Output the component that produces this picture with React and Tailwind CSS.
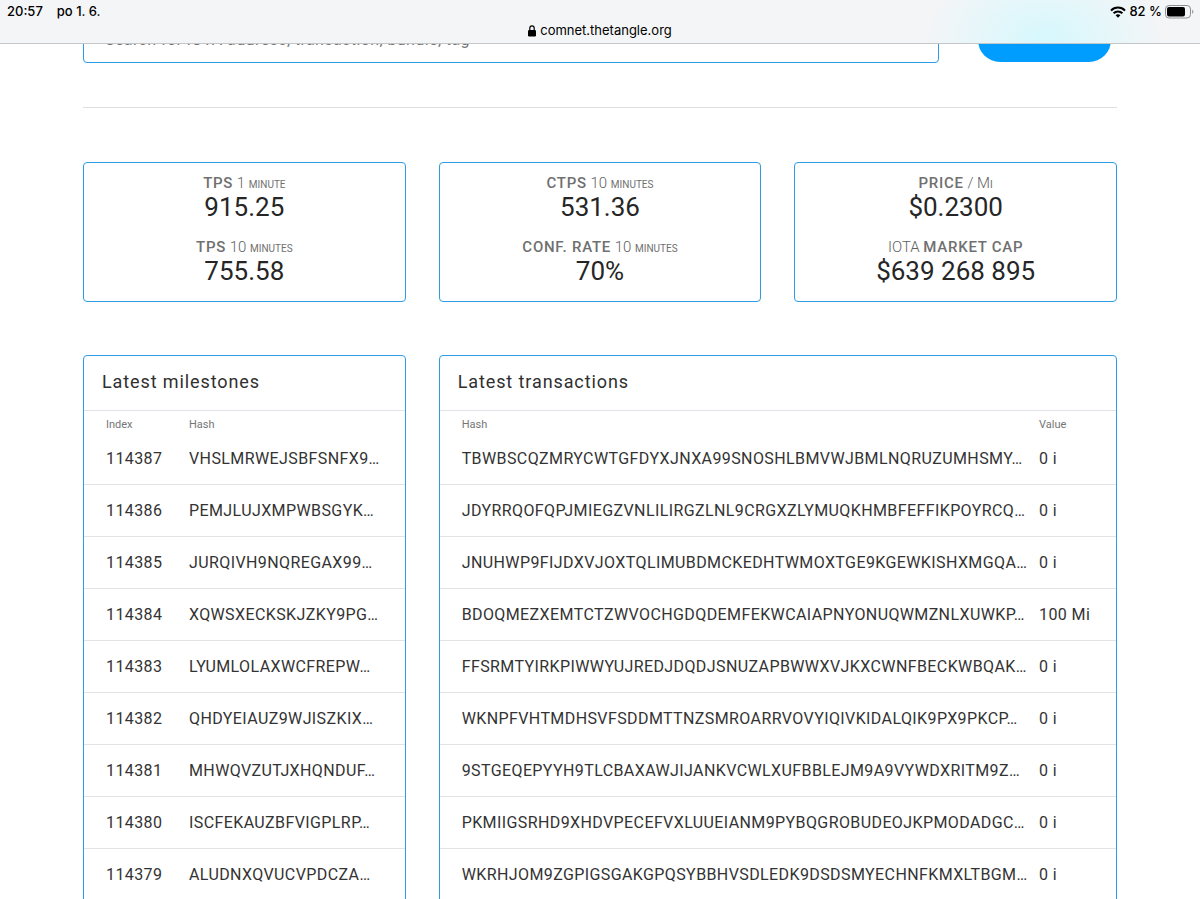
import { Search } from 'lucide-react';

const MILESTONES = [
  { index: '114387', hash: 'VHSLMRWEJSBFSNFX9…' },
  { index: '114386', hash: 'PEMJLUJXMPWBSGYK…' },
  { index: '114385', hash: 'JURQIVH9NQREGAX99…' },
  { index: '114384', hash: 'XQWSXECKSKJZKY9PG…' },
  { index: '114383', hash: 'LYUMLOLAXWCFREPW…' },
  { index: '114382', hash: 'QHDYEIAUZ9WJISZKIX…' },
  { index: '114381', hash: 'MHWQVZUTJXHQNDUF…' },
  { index: '114380', hash: 'ISCFEKAUZBFVIGPLRP…' },
  { index: '114379', hash: 'ALUDNXQVUCVPDCZA…' },
];

const TRANSACTIONS = [
  { hash: 'TBWBSCQZMRYCWTGFDYXJNXA99SNOSHLBMVWJBMLNQRUZUMHSMY…', value: '0 i' },
  { hash: 'JDYRRQOFQPJMIEGZVNLILIRGZLNL9CRGXZLYMUQKHMBFEFFIKPOYRCQ…', value: '0 i' },
  { hash: 'JNUHWP9FIJDXVJOXTQLIMUBDMCKEDHTWMOXTGE9KGEWKISHXMGQA…', value: '0 i' },
  { hash: 'BDOQMEZXEMTCTZWVOCHGDQDEMFEKWCAIAPNYONUQWMZNLXUWKP…', value: '100 Mi' },
  { hash: 'FFSRMTYIRKPIWWYUJREDJDQDJSNUZAPBWWXVJKXCWNFBECKWBQAK…', value: '0 i' },
  { hash: 'WKNPFVHTMDHSVFSDDMTTNZSMROARRVOVYIQIVKIDALQIK9PX9PKCP…', value: '0 i' },
  { hash: '9STGEQEPYYH9TLCBAXAWJIJANKVCWLXUFBBLEJM9A9VYWDXRITM9Z…', value: '0 i' },
  { hash: 'PKMIIGSRHD9XHDVPECEFVXLUUEIANM9PYBQGROBUDEOJKPMODADGC…', value: '0 i' },
  { hash: 'WKRHJOM9ZGPIGSGAKGPQSYBBHVSDLEDK9DSDSMYECHNFKMXLTBGM…', value: '0 i' },
];

function StatusBar() {
  return (
    <header className="fixed inset-x-0 top-0 z-10 h-11 border-b border-[#c4c6c8] bg-[#f4f5f7] font-['Inter',sans-serif] text-black">
      <div className="h-full bg-[radial-gradient(ellipse_120px_80px_at_87%_90%,#d6f8fd,transparent)]">
        <div className="flex h-[23px] items-center justify-between pr-1.5 pl-[7px] text-[13px] font-medium">
          <div className="flex gap-3.5">
            <span>20:57</span>
            <span>po 1. 6.</span>
          </div>
          <div className="flex items-center gap-[3px]">
            <svg viewBox="0 0 16 12" className="h-3 w-4" fill="none" stroke="currentColor" strokeWidth="2">
              <path d="M1 4.6 C4.8 0.6 11.2 0.6 15 4.6" />
              <path d="M3.6 7.3 C6 4.8 10 4.8 12.4 7.3" />
              <path d="M8 11.8 L5.6 9.3 C7 8 9 8 10.4 9.3 Z" fill="currentColor" stroke="none" />
            </svg>
            <span>82 %</span>
            <svg viewBox="0 0 29 14" className="h-3.5 w-[29px]">
              <rect x="0.5" y="0.5" width="25" height="12.5" rx="3.5" fill="none" stroke="#8c8f91" />
              <rect x="2" y="2" width="18" height="9.5" rx="2" />
              <path d="M27.2 4.8 C28.8 5.4 28.8 8.2 27.2 8.8 Z" fill="#8c8f91" />
            </svg>
          </div>
        </div>
        <div className="flex h-4 items-center justify-center gap-1 text-[13px]">
          <svg viewBox="0 0 8 12" className="h-3 w-2">
            <rect y="5" width="8" height="6.5" rx="1.2" />
            <path d="M1.8 5.5 V3.2 a2.2 2.4 0 0 1 4.4 0 V5.5" fill="none" stroke="currentColor" strokeWidth="1.2" />
          </svg>
          <span>comnet.thetangle.org</span>
        </div>
      </div>
    </header>
  );
}

function Stat({ label, value }) {
  return (
    <div className="h-16 text-center">
      <div className="h-5 text-[15px] leading-5 font-light text-[#5f5f5f]">{label}</div>
      <div className="text-[26px] leading-7 text-[#262626]">{value}</div>
    </div>
  );
}

function Strong({ children }) {
  return <strong className="font-medium tracking-wider text-[#707070]">{children}</strong>;
}

function Unit({ children }) {
  return <span className="text-[10px] leading-none font-normal text-[#707070] uppercase">{children}</span>;
}

function StatCard({ children }) {
  return <div className="h-[140px] rounded border border-[#2d9ce6] pt-[10px]">{children}</div>;
}

function Panel({ title, className = '', children }) {
  return (
    <section className={`rounded border border-[#2d9ce6] pb-6 ${className}`}>
      <h2 className="border-b border-[#e2e3ea] px-[18px] pt-3 pb-3.5 text-lg leading-7 tracking-wider text-[#2f2f2f]">{title}</h2>
      {children}
    </section>
  );
}

function Th({ className = '', children }) {
  return <th className={`h-[22px] pt-1.5 text-left text-[11px] leading-4 font-normal text-[#757575] ${className}`}>{children}</th>;
}

function Td({ className = '', children }) {
  return <td className={`h-[52px] border-b border-[#e2e3e6] whitespace-nowrap ${className}`}>{children}</td>;
}

export default function App() {
  return (
    <div className="h-screen overflow-hidden bg-white font-['Roboto',sans-serif] text-[#333333]">
      <StatusBar />

      <main className="px-[83px] pt-[18px]">
        <form className="flex items-start gap-[39px] pr-1.5">
          <input
            type="text"
            aria-label="Search"
            placeholder="Search for IOTA address, transaction, bundle, tag"
            className="h-[45px] min-w-0 flex-1 rounded border border-[#2d9ce6] px-[21px] pb-0.5 text-base tracking-wide placeholder:text-[#757575]"
          />
          <button
            type="submit"
            className="flex h-11 w-[133px] items-center justify-center gap-2 rounded-full bg-[#009dff] pb-1.5 text-sm font-medium text-white"
          >
            <Search className="size-4" />
            Search
          </button>
        </form>

        <hr className="mt-11 border-[#dedede]" />

        <div className="mt-[54px] grid grid-cols-3 gap-x-[33px] gap-y-[53px]">
          <StatCard>
            <Stat label={<><Strong>TPS</Strong> 1 <Unit>minute</Unit></>} value="915.25" />
            <Stat label={<><Strong>TPS</Strong> 10 <Unit>minutes</Unit></>} value="755.58" />
          </StatCard>
          <StatCard>
            <Stat label={<><Strong>CTPS</Strong> 10 <Unit>minutes</Unit></>} value="531.36" />
            <Stat label={<><Strong>CONF. RATE</Strong> 10 <Unit>minutes</Unit></>} value="70%" />
          </StatCard>
          <StatCard>
            <Stat label={<><Strong>PRICE</Strong> / M<Unit>i</Unit></>} value="$0.2300" />
            <Stat label={<>IOTA <Strong>MARKET CAP</Strong></>} value="$639 268 895" />
          </StatCard>

          <Panel title="Latest milestones">
            <table className="w-full table-fixed border-separate border-spacing-0">
              <thead>
                <tr>
                  <Th className="w-[105px] pl-[22px]">Index</Th>
                  <Th>Hash</Th>
                </tr>
              </thead>
              <tbody className="tracking-wide">
                {MILESTONES.map((m) => (
                  <tr key={m.index}>
                    <Td className="pl-[22px]">{m.index}</Td>
                    <Td><a href="#">{m.hash}</a></Td>
                  </tr>
                ))}
              </tbody>
            </table>
          </Panel>

          <Panel title="Latest transactions" className="col-span-2">
            <table className="w-full table-fixed border-separate border-spacing-0">
              <thead>
                <tr>
                  <Th className="pl-[22px]">Hash</Th>
                  <Th className="w-[77px]">Value</Th>
                </tr>
              </thead>
              <tbody className="tracking-wide">
                {TRANSACTIONS.map((t) => (
                  <tr key={t.hash}>
                    <Td className="pl-[22px]"><a href="#">{t.hash}</a></Td>
                    <Td>{t.value}</Td>
                  </tr>
                ))}
              </tbody>
            </table>
          </Panel>
        </div>
      </main>
    </div>
  );
}
